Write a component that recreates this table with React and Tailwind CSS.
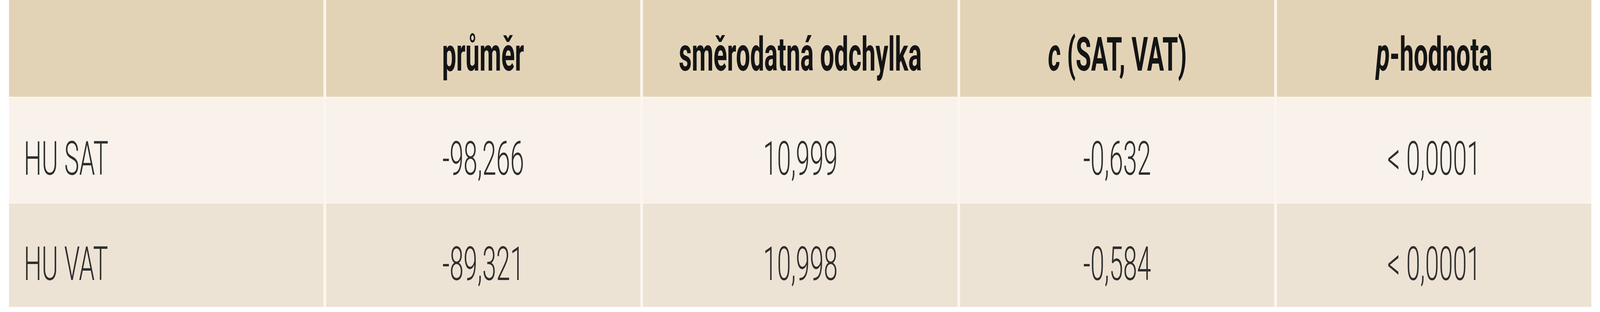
import React from "react";

// The frame is narrower than the 7636px reference, so the column layout is
// fluid (vw) and each label is squeezed horizontally by 4096/7636.
const rows = [
  ["HU SAT", "-98,266", "10,999", "-0,632", "< 0,0001"],
  ["HU VAT", "-89,321", "10,998", "-0,584", "< 0,0001"],
];

function Label({ children, left }) {
  return (
    <span
      className={`inline-block whitespace-nowrap scale-x-[0.5364] ${
        left ? "origin-left" : "origin-center"
      }`}
    >
      {children}
    </span>
  );
}

function HeadCell({ children }) {
  return (
    <div className="flex justify-center bg-[#e3d3b6] pt-[70px] font-bold text-[#141414] leading-[141px]">
      <Label>{children}</Label>
    </div>
  );
}

function BodyRow({ cells, bg }) {
  return cells.map((c, i) => (
    <div
      key={i}
      className={`flex ${bg} pt-[85px] font-light text-[#2e2e2e] leading-[141px] ${
        i === 0 ? "justify-start pl-[0.917vw]" : "justify-center"
      }`}
    >
      <Label left={i === 0}>{c}</Label>
    </div>
  ));
}

export default function App() {
  return (
    <div className="w-full h-[800px] overflow-hidden bg-white font-['Roboto',sans-serif] text-[120px]">
      <div className="ml-[0.563vw] w-[98.9vw] grid grid-cols-5 grid-rows-[248px_267px_265px] gap-x-[0.17vw] gap-y-[3.5px] bg-[#fbf6ee]">
        <HeadCell>&nbsp;</HeadCell>
        <HeadCell>průměr</HeadCell>
        <HeadCell>směrodatná odchylka</HeadCell>
        <HeadCell>
          <i>c</i> (SAT, VAT)
        </HeadCell>
        <HeadCell>
          <i>p</i>-hodnota
        </HeadCell>
        <BodyRow cells={rows[0]} bg="bg-[#f9f2ea]" />
        <BodyRow cells={rows[1]} bg="bg-[#ede3d4]" />
      </div>
    </div>
  );
}
